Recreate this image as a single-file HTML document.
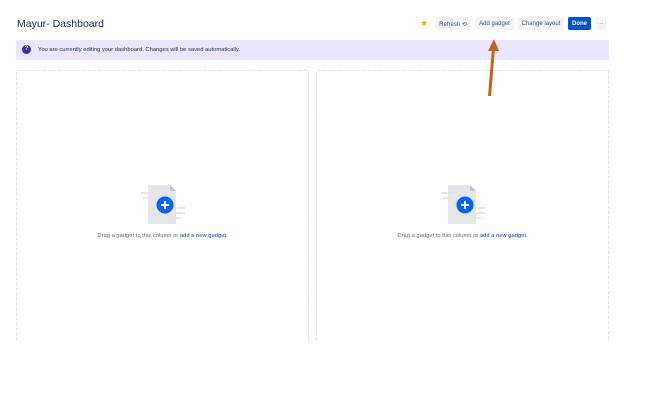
<!DOCTYPE html><html><head><style>
body{margin:0;width:669px;height:407px;background:#fff;font-family:"Liberation Sans",sans-serif;position:relative;overflow:hidden}
.a{position:absolute}
.btn{position:absolute;top:17px;height:13px;background:#f4f5f7;border-radius:2px;font-size:6px;color:#42526e;display:flex;align-items:center;justify-content:center;padding-top:1px;box-sizing:border-box}
.col{position:absolute;top:70px;width:291px;height:272px;border:1px dashed #dfe1e6;border-bottom:none;border-radius:2px}
.txt{position:absolute;top:162px;width:100%;text-align:center;font-size:5.8px;color:#5e6c84}
.txt b{color:#0052cc;font-weight:normal}
</style></head><body>
<div class="a" style="left:17px;top:18px;font-size:10.5px;color:#172b4d">Mayur- Dashboard</div>
<div class="a" style="left:420px;top:18px;color:#ffab00;font-size:9px">★</div>
<div class="btn" style="left:435px;width:36px">Refresh ⟲</div>
<div class="btn" style="left:475px;width:39px">Add gadget</div>
<div class="btn" style="left:518px;width:46px">Change layout</div>
<div class="btn" style="left:568px;width:23px;background:#0052cc;color:#fff;font-weight:bold">Done</div>
<div class="btn" style="left:595px;width:11px">···</div>
<div class="a" style="left:16px;top:40px;width:593px;height:20px;background:#eae6ff;border-radius:2px"></div>
<div class="a" style="left:22px;top:45px;width:9px;height:9px;border-radius:50%;background:#403294;color:#fff;font-size:6px;text-align:center;line-height:9px;font-weight:bold">?</div>
<div class="a" style="left:38px;top:47px;font-size:5.8px;color:#172b4d">You are currently editing your dashboard. Changes will be saved automatically.</div>
<div class="col" style="left:16px"><svg class="a" style="left:122px;top:113px" width="50" height="42"><path d="M9 1h22l6 6v33H9z" fill="#e4e6ea"/><path d="M31 1v6h6z" fill="#c1c7d0"/><g stroke="#dfe1e6" stroke-width="1.5"><path d="M2 9h12M4 14h8M38 24h8M36 29h10M34 34h8"/></g><circle cx="26" cy="21" r="8.5" fill="#0065ff"/><path d="M26 17v8M22 21h8" stroke="#fff" stroke-width="2"/></svg><div class="txt">Drag a gadget to this column or <b>add a new gadget</b>.</div></div>
<div class="col" style="left:316px"><svg class="a" style="left:122px;top:113px" width="50" height="42"><path d="M9 1h22l6 6v33H9z" fill="#e4e6ea"/><path d="M31 1v6h6z" fill="#c1c7d0"/><g stroke="#dfe1e6" stroke-width="1.5"><path d="M2 9h12M4 14h8M38 24h8M36 29h10M34 34h8"/></g><circle cx="26" cy="21" r="8.5" fill="#0065ff"/><path d="M26 17v8M22 21h8" stroke="#fff" stroke-width="2"/></svg><div class="txt">Drag a gadget to this column or <b>add a new gadget</b>.</div></div>
<svg class="a" style="left:0;top:0" width="669" height="407"><path d="M489.5 96L493.5 48" stroke="#c8641a" stroke-width="3"/><path d="M488 51L494 39L499 51z" fill="#c8641a"/></svg>
</body></html>
